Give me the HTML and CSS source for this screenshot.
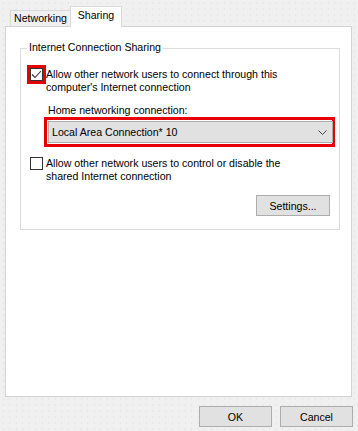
FILE: index.html
```html
<!DOCTYPE html>
<html>
<head>
<meta charset="utf-8">
<link rel="stylesheet" href="styles.css">
</head>
<body>
<div class="dialog">
  <div class="tabs">
    <div class="tab">Networking</div>
    <div class="tab active">Sharing</div>
  </div>
  <div class="panel">
    <div class="group">
      <span class="legend">Internet Connection Sharing</span>
      <div class="check-row">
        <span class="checkbox highlight"><svg width="11" height="11" viewBox="0 0 11 11"><polyline points="1,5.5 4,8.5 10,2" fill="none" stroke="#333" stroke-width="1.1"/></svg></span>
        <span class="check-text">Allow other network users to connect through this<br>computer's Internet connection</span>
      </div>
      <div class="field-label">Home networking connection:</div>
      <div class="highlight-box">
        <div class="combo">
          <span>Local Area Connection* 10</span>
          <svg width="9" height="5" viewBox="0 0 9 5"><polyline points="0.5,0.5 4.5,4.5 8.5,0.5" fill="none" stroke="#444" stroke-width="1"/></svg>
        </div>
      </div>
      <div class="check-row second">
        <span class="checkbox"></span>
        <span class="check-text">Allow other network users to control or disable the<br>shared Internet connection</span>
      </div>
      <div class="settings-row"><button class="btn settings">Settings...</button></div>
    </div>
  </div>
  <div class="footer">
    <button class="btn">OK</button>
    <button class="btn">Cancel</button>
  </div>
</div>
</body>
</html>
```
FILE: styles.css
```css
html, body {
  margin: 0;
  padding: 0;
}
body {
  width: 358px;
  height: 431px;
  background-color: #f0f0f0;
  background-image: radial-gradient(circle, #e4e4e4 0.5px, transparent 0.8px);
  background-size: 6.5px 6px;
  font-family: "Liberation Sans", Arial, sans-serif;
  font-size: 10.6px;
  color: #000;
  overflow: hidden;
}
.dialog {
  padding-top: 6px;
}
.tabs {
  display: flex;
  align-items: flex-end;
  height: 20px;
  margin-left: 10px;
}
.tab {
  box-sizing: border-box;
  height: 16px;
  width: 61px;
  border: 1px solid #d9d9d9;
  border-bottom: none;
  background: #f0f0f0;
  display: flex;
  align-items: center;
  justify-content: center;
  line-height: 13px;
}
.tab.active {
  position: relative;
  z-index: 1;
  height: 21px;
  width: 52px;
  margin-left: -1px;
  margin-bottom: -1px;
  background: #fff;
  padding-bottom: 3px;
}
.panel {
  box-sizing: border-box;
  margin-left: 5px;
  width: 347px;
  height: 371px;
  background: #fff;
  border: 1px solid #d3d3d3;
  padding-top: 21px;
  padding-left: 14px;
}
.group {
  position: relative;
  box-sizing: border-box;
  width: 320px;
  height: 182px;
  border: 1px solid #dcdcdc;
  padding: 19px 0 0 9px;
}
.legend {
  position: absolute;
  top: -8px;
  left: 6px;
  padding: 0 2px;
  background: #fff;
  line-height: 13px;
}
.check-row {
  display: flex;
  align-items: flex-start;
  line-height: 13px;
}
.check-row.second {
  margin-top: 10px;
}
.checkbox {
  box-sizing: border-box;
  flex: none;
  width: 13px;
  height: 13px;
  border: 1px solid #333;
  background: #fff;
  margin-right: 3px;
  display: flex;
  align-items: center;
  justify-content: center;
}
.checkbox svg {
  display: block;
}
.checkbox.highlight {
  outline: 3px solid #e80000;
}
.field-label {
  margin-top: 10px;
  margin-left: 18px;
  line-height: 13px;
}
.highlight-box {
  box-sizing: border-box;
  margin-left: 14px;
  width: 291px;
  height: 30px;
  border: 3px solid #e80000;
  padding: 1px 0 1px 1px;
}
.combo {
  box-sizing: border-box;
  height: 22px;
  width: 285px;
  background: #e1e1e1;
  border: 1px solid #adadad;
  display: flex;
  align-items: center;
  justify-content: space-between;
  padding: 0 5px 0 3px;
}
.combo svg {
  display: block;
}
.settings-row {
  display: flex;
  justify-content: flex-end;
  margin-top: 12px;
  margin-right: 9px;
}
.btn {
  box-sizing: border-box;
  width: 73px;
  height: 21px;
  background: #e1e1e1;
  border: 1px solid #adadad;
  font-family: inherit;
  font-size: inherit;
  color: #000;
  padding: 0;
  margin: 0;
}
.btn.settings {
  width: 74px;
}
.footer {
  display: flex;
  justify-content: flex-end;
  gap: 8px;
  margin-top: 9px;
  padding-right: 5px;
}
```
